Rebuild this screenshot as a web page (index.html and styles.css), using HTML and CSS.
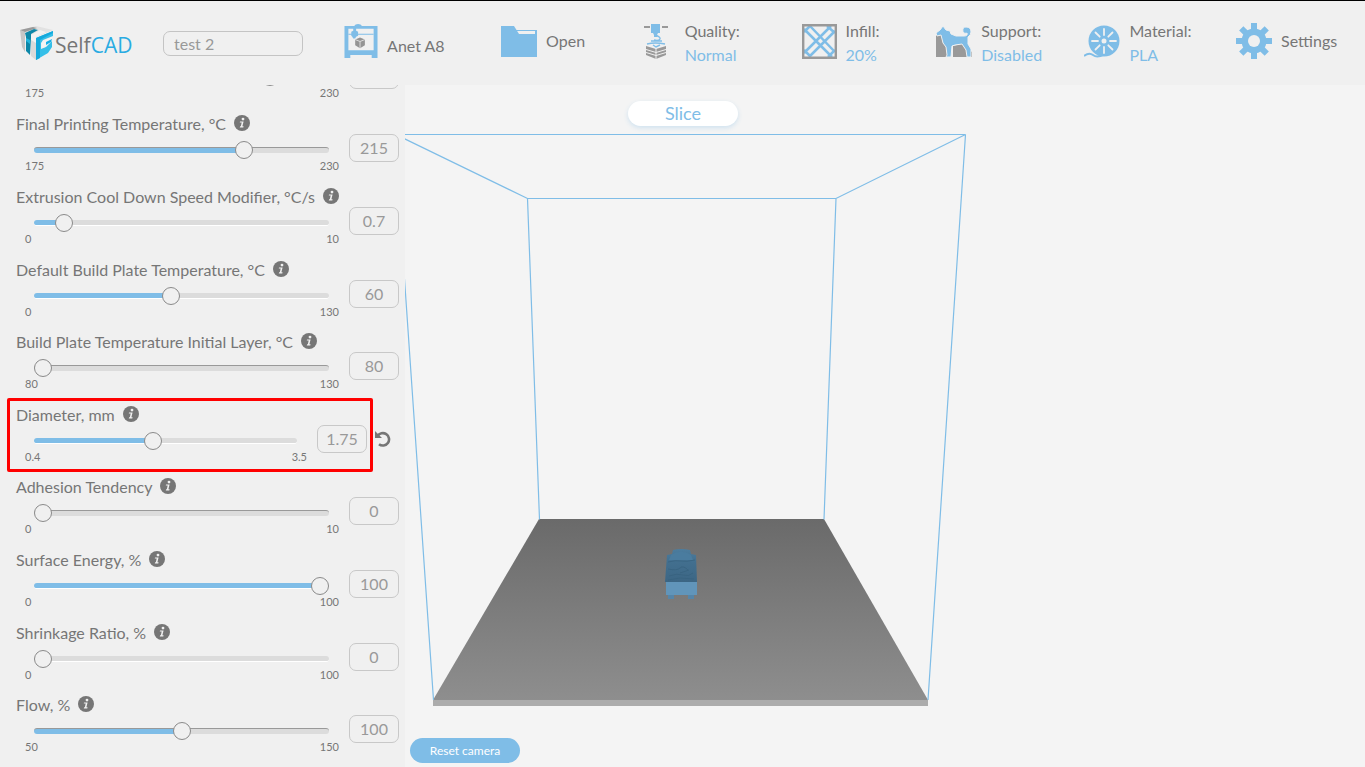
FILE: index.html
```html
<!DOCTYPE html>
<html lang="en">
<head>
<meta charset="utf-8">
<title>SelfCAD slicer</title>
<link rel="stylesheet" href="styles.css">
</head>
<body>
<svg class="defs" aria-hidden="true">
  <symbol id="info" viewBox="0 0 16 16">
    <circle cx="8" cy="8" r="8" fill="#767676"/>
    <circle cx="9" cy="4.1" r="1.4" fill="#f0f0f0"/>
    <path d="M6 6.4h3.6L8.4 11.2h1.2l-.3 1.2H5.8l.3-1.1h.7l.9-3.8H5.8z" fill="#f0f0f0"/>
  </symbol>
</svg>
<header class="topbar">
  <div class="brand">
    <a class="logo" href="#">
      <svg class="logo-mark" width="33" height="34" viewBox="0 0 33 34" aria-hidden="true">
        <path d="M0 4L16 0l17 4-17 7z" fill="#e2e2e2"/>
        <path d="M0 4l5 2v20l-3-5z" fill="#c6c6c6"/>
        <path d="M0 4L13 1l4 1L5 6z" fill="#9a9a9a"/>
        <path d="M5 7l9-4 4 1-7 4v4l-1 17-4-4V11z" fill="#0d87a8"/>
        <path d="M6 12l4 2v4l-4-3z" fill="#23b5dd"/>
        <path d="M11 9l9-5 6 2-10 5v22l-5-3z" fill="#f2f2f2"/>
        <path d="M11 14l5 3v17l-5-4z" fill="#dadada"/>
        <path d="M16 12L33 5v5l-10 4-2 3v6l5-2 6-6v6l-4 6-12 7z" fill="#35bfe8"/>
        <path d="M16 12L33 5v2l-13 7v18l-4 2z" fill="#15a9dc"/>
        <path d="M24 15l8-4-1 4-6 6-3 1v-5z" fill="#f4f4f4"/>
        <path d="M26 16l6-3-1 3-5 3z" fill="#18b0e8"/>
      </svg>
      <span class="logo-text">Self</span><span class="logo-text logo-accent">CAD</span>
    </a>
    <input class="project-name" type="text" value="test 2" aria-label="Project name">
  </div>
  <nav class="tools">
    <button class="tool" type="button">
      <svg width="34" height="34" viewBox="0 0 34 35" aria-hidden="true">
        <path fill="#7fbde7" fill-rule="evenodd" d="M0 2h10q1-2 4-2 3 0 4 2h16v33h-6v-3H6v3H0zM4 5v22h26V5z"/>
        <path fill="#7fbde7" d="M4 10h26v1H4zM9 4h3v3l2 1v4l-2 1-1 2H9l-1-2-1-1V8l2-1z"/>
        <path fill="#949494" d="M16 14l5 2v6l-5 3-5-3v-6z"/>
        <path fill="none" stroke="#ededed" stroke-width=".8" d="M11 16l5 2 5-2M16 18v7"/>
      </svg>
      <span class="tool-label low">Anet A8</span>
    </button>
    <button class="tool" type="button">
      <svg width="36" height="31" viewBox="0 0 36 31" aria-hidden="true">
        <path fill="#7fbde7" d="M0 0h13l5 8h16V5H16l-1-1h21v27H0z"/>
      </svg>
      <span class="tool-label">Open</span>
    </button>
    <button class="tool wide" type="button">
      <svg width="25" height="35" viewBox="0 0 25 35" aria-hidden="true">
        <path fill="#999" d="M0 2h6v2H0zM18 2h6v2h-6zM2 22l10 3 10-3v3l-10 3-10-3zM2 26l10 3 10-3v2l-10 3-10-3zM2 29l10 3 10-3v2l-10 4-10-4z"/>
        <path fill="#7fbde7" d="M7 0h9v9h-2l-1 2v2h-3v-2L9 9H7z"/>
        <path fill="none" stroke="#7fbde7" stroke-width="1.400" d="M11 11q6 2 5 4t-6 1M7 17h11M3 20q8-2 18 0M9 21l3 2 4-2"/>
        <path fill="none" stroke="#f0f0f0" d="M12 24v11"/>
      </svg>
      <span class="tool-label stacked">Quality:<span class="tool-value">Normal</span></span>
    </button>
    <button class="tool" type="button">
      <svg width="35" height="35" viewBox="0 0 35 35" aria-hidden="true">
        <path fill="none" stroke="#7fbde7" stroke-width="2.500" d="M2 8L8 2M2 29L29 2M7 33L33 7M26 33l7-7M2 26l7 7M2 5l28 28M8 2l25 26M25 2l8 7"/>
        <path fill="none" stroke="#999" stroke-width="2.400" d="M1.200 1.200h32.600v32.600H1.200z"/>
      </svg>
      <span class="tool-label stacked">Infill:<span class="tool-value">20%</span></span>
    </button>
    <button class="tool" type="button">
      <svg width="36" height="31" viewBox="0 0 36 31" aria-hidden="true">
        <path fill="#999" d="M0 9h7l4 6 2 16H0zM17 20l8-2h6l2 6 3 2v5H17z"/>
        <path stroke="#f0f0f0" stroke-width="1" fill="#7fbde7" d="M7 0l3 4 4 1 1 3 5 2h8q4 0 3-3-1 1-2 0-1 1-2-1-1-5 3-5 5 0 5 5 0 3-3 5v7l3 5v8h-4l-1-7-4-6-7 1-3 1-1 11h-5l1-2-1-8-3-4-2-8-4 1-1-3 4-3z"/>
      </svg>
      <span class="tool-label stacked">Support:<span class="tool-value">Disabled</span></span>
    </button>
    <button class="tool" type="button">
      <svg width="36" height="33" viewBox="0 0 36 33" aria-hidden="true">
        <circle cx="20" cy="16" r="15.500" fill="#7fbde7"/>
        <path d="M0 31q5-4 9-1t11-.5" fill="none" stroke="#7fbde7" stroke-width="2"/>
        <path stroke="#f0f0f0" stroke-width="1.800" stroke-linecap="round" d="M20 4v6M20 22v6M8 16h6M26 16h6M11.500 7.500l4.200 4.200M24.300 20.300l4.200 4.200M28.500 7.500l-4.200 4.200M15.700 20.300l-4.200 4.200"/>
        <circle cx="20" cy="16" r="2.500" fill="#f0f0f0"/>
      </svg>
      <span class="tool-label stacked">Material:<span class="tool-value">PLA</span></span>
    </button>
    <button class="tool" type="button">
      <svg width="36" height="36" viewBox="-18 -18 36 36" aria-hidden="true">
        <g fill="#7fbde7">
          <path d="M-3-18h6v36h-6z"/>
          <path d="M-3-18h6v36h-6z" transform="rotate(45)"/>
          <path d="M-3-18h6v36h-6z" transform="rotate(90)"/>
          <path d="M-3-18h6v36h-6z" transform="rotate(135)"/>
          <circle r="12.500"/>
        </g>
        <circle r="6" fill="#f0f0f0"/>
      </svg>
      <span class="tool-label">Settings</span>
    </button>
  </nav>
</header>
<main class="workspace">
  <form class="panel">
    <div class="param">
      <div class="param-main">
        <label class="param-name" for="r0">Printing Temperature, °C <svg class="info"><use href="#info"/></svg></label>
        <input class="slider" id="r0" type="range" min="175" max="230" value="220" style="--fill:82%">
        <div class="scale"><span>175</span><span>230</span></div>
      </div>
      <input class="value" type="text" value="220" aria-label="Printing Temperature value">
    </div>
    <div class="param">
      <div class="param-main">
        <label class="param-name" for="r1">Final Printing Temperature, °C <svg class="info"><use href="#info"/></svg></label>
        <input class="slider edged" id="r1" type="range" min="175" max="230" value="215" style="--fill:72%">
        <div class="scale"><span>175</span><span>230</span></div>
      </div>
      <input class="value" type="text" value="215" aria-label="Final Printing Temperature value">
    </div>
    <div class="param">
      <div class="param-main">
        <label class="param-name" for="r2">Extrusion Cool Down Speed Modifier, °C/s <svg class="info"><use href="#info"/></svg></label>
        <input class="slider" id="r2" type="range" min="0" max="10" step="0.05" value="0.75" style="--fill:8%">
        <div class="scale"><span>0</span><span>10</span></div>
      </div>
      <input class="value" type="text" value="0.7" aria-label="Extrusion Cool Down Speed Modifier value">
    </div>
    <div class="param">
      <div class="param-main">
        <label class="param-name" for="r3">Default Build Plate Temperature, °C <svg class="info"><use href="#info"/></svg></label>
        <input class="slider" id="r3" type="range" min="0" max="130" value="60" style="--fill:46%">
        <div class="scale"><span>0</span><span>130</span></div>
      </div>
      <input class="value" type="text" value="60" aria-label="Default Build Plate Temperature value">
    </div>
    <div class="param">
      <div class="param-main">
        <label class="param-name" for="r4">Build Plate Temperature Initial Layer, °C <svg class="info"><use href="#info"/></svg></label>
        <input class="slider edged" id="r4" type="range" min="80" max="130" value="80" style="--fill:0%">
        <div class="scale"><span>80</span><span>130</span></div>
      </div>
      <input class="value" type="text" value="80" aria-label="Build Plate Temperature Initial Layer value">
    </div>
    <div class="param highlighted">
      <div class="param-main">
        <label class="param-name" for="r5">Diameter, mm <svg class="info"><use href="#info"/></svg></label>
        <input class="slider" id="r5" type="range" min="0.4" max="3.5" step="0.01" value="1.79" style="--fill:45%">
        <div class="scale"><span>0.4</span><span>3.5</span></div>
      </div>
      <input class="value" type="text" value="1.75" aria-label="Diameter value">
      <button class="reset" type="button" aria-label="Reset diameter">
        <svg width="16" height="16" viewBox="0 0 16 16" aria-hidden="true"><path d="M2.500 5.200A6.200 6.200 0 1 1 4 13.200" fill="none" stroke="#767676" stroke-width="2.600"/><path d="M0 0v7h7z" fill="#767676"/></svg>
      </button>
    </div>
    <div class="param">
      <div class="param-main">
        <label class="param-name" for="r6">Adhesion Tendency <svg class="info"><use href="#info"/></svg></label>
        <input class="slider edged" id="r6" type="range" min="0" max="10" value="0" style="--fill:0%">
        <div class="scale"><span>0</span><span>10</span></div>
      </div>
      <input class="value" type="text" value="0" aria-label="Adhesion Tendency value">
    </div>
    <div class="param">
      <div class="param-main">
        <label class="param-name" for="r7">Surface Energy, % <svg class="info"><use href="#info"/></svg></label>
        <input class="slider" id="r7" type="range" min="0" max="100" value="100" style="--fill:98%">
        <div class="scale"><span>0</span><span>100</span></div>
      </div>
      <input class="value" type="text" value="100" aria-label="Surface Energy value">
    </div>
    <div class="param">
      <div class="param-main">
        <label class="param-name" for="r8">Shrinkage Ratio, % <svg class="info"><use href="#info"/></svg></label>
        <input class="slider" id="r8" type="range" min="0" max="100" value="0" style="--fill:0%">
        <div class="scale"><span>0</span><span>100</span></div>
      </div>
      <input class="value" type="text" value="0" aria-label="Shrinkage Ratio value">
    </div>
    <div class="param">
      <div class="param-main">
        <label class="param-name" for="r9">Flow, % <svg class="info"><use href="#info"/></svg></label>
        <input class="slider edged" id="r9" type="range" min="50" max="150" value="100" style="--fill:50%">
        <div class="scale"><span>50</span><span>150</span></div>
      </div>
      <input class="value" type="text" value="100" aria-label="Flow value">
    </div>
  </form>
  <section class="viewport" aria-label="Build volume">
    <svg class="scene" viewBox="405 85 960 682" preserveAspectRatio="xMidYMid slice" aria-hidden="true">
      <defs>
        <linearGradient id="plate" x1="0" y1="0" x2="0" y2="1">
          <stop offset="0" stop-color="#6a6a6a"/><stop offset="1" stop-color="#8e8e8e"/>
        </linearGradient>
        <linearGradient id="quilt" x1="0" y1="0" x2="0" y2="1">
          <stop offset="0" stop-color="#4c7d9f"/><stop offset=".4" stop-color="#426f8f"/><stop offset="1" stop-color="#3c6684"/>
        </linearGradient>
      </defs>
      <path d="M539 519H824L928 700H433z" fill="url(#plate)"/>
      <path d="M433 700h495v6H433z" fill="#acacac"/>
      <g fill="none" stroke="#7fbde7" stroke-width="1.200">
        <path d="M404 134.500H965.500L836 198.500H527.500L404 138.500M527.500 198.500L539.500 519.500M836 198.500L824 519.500M965.500 134.500L928 700M404.500 279L433.500 700"/>
      </g>
      <path d="M668 594h6v5h-6zM688 594h6v5h-6z" fill="#5585a8"/>
      <path d="M667 555l5-1 1-4q8-2 17 0l1 4 5 1 1 27h-32z" fill="url(#quilt)"/>
      <path d="M671 555q10-7 20 0l2 5h-24z" fill="#4a7c9f"/>
      <path d="M668 562q8-2 13-1t14-1M668 569q9 2 12-1t8 2M680 573l9-3M669 576q8-3 14-1t10-2M668 580l12-2 14 1" fill="none" stroke="#37627f" stroke-width=".8"/>
      <path d="M666 582h31v13h-31z" fill="#6195ba"/>
    </svg>
    <button class="slice" type="button">Slice</button>
    <button class="reset-camera" type="button">Reset camera</button>
  </section>
</main>
</body>
</html>
```
FILE: styles.css
```css
*,
*::after {
  box-sizing: border-box;
}

body {
  margin: 0;
  height: 100vh;
  display: flex;
  flex-direction: column;
  overflow: hidden;
  background: #f4f4f4;
  color: #767676;
  font: 16px/24px Lato, "Liberation Sans", sans-serif;
}

button,
input {
  font: inherit;
  color: inherit;
}

button {
  padding: 0;
  border: 0;
  background: none;
  cursor: pointer;
}

.defs {
  position: absolute;
  width: 0;
  height: 0;
}

/* Top bar */
.topbar {
  display: flex;
  flex: none;
  height: 85px;
  border-top: 1px solid #000;
  background: #f0f0f0;
}

.brand {
  display: flex;
  align-items: center;
  justify-content: space-between;
  flex: none;
  width: 320px;
  padding: 0 17px 0 20px;
}

.logo {
  display: flex;
  align-items: center;
  color: #767676;
  text-decoration: none;
}

.logo-mark {
  margin-right: 2px;
}

.logo-text {
  padding-top: 4px;
  font: 21px/30px "Open Sans", sans-serif;
}

.logo-accent {
  color: #29abe2;
}

.project-name {
  width: 140px;
  height: 25px;
  padding: 0 10px;
  border: 1px solid #c4c4c4;
  border-radius: 7px;
  background: transparent;
  color: #999;
}

.tools {
  display: grid;
  flex: 1;
  grid-template-columns: repeat(7, 1fr);
  margin-right: 4px;
}

.tool {
  display: flex;
  align-items: center;
  justify-content: center;
  gap: 9px;
  padding-bottom: 4px;
  text-align: left;
}

.tool.wide {
  gap: 16px;
}

.tool-label.low {
  padding-top: 10px;
}

.tool-label.stacked {
  padding-top: 4px;
}

.tool-value {
  display: block;
  color: #7fbde7;
}

/* Parameter panel */
.workspace {
  display: flex;
  flex: 1;
  min-height: 0;
}

.panel {
  display: flex;
  flex: none;
  flex-direction: column;
  justify-content: flex-end;
  width: 405px;
  padding-bottom: 1px;
  overflow: hidden;
  background: #f0f0f0;
}

.param {
  position: relative;
  display: flex;
  flex: none;
  gap: 10px;
  height: 73px;
  padding-right: 6px;
}

.param:nth-child(5n + 4),
.param.highlighted {
  height: 72px;
}

.param-main {
  display: flex;
  flex: 1;
  flex-direction: column;
}

.param-name {
  display: flex;
  align-items: center;
  gap: 8px;
  height: 24px;
  padding-left: 16px;
  white-space: nowrap;
}

.info {
  width: 16px;
  height: 16px;
  margin-bottom: 2px;
}

.slider {
  flex: none;
  height: 22px;
  margin: 3px 10px 0 34px;
  appearance: none;
  background: transparent;
}

.slider::-webkit-slider-runnable-track {
  height: 6px;
  border-bottom: 1px solid #fff;
  border-radius: 3px;
  background: linear-gradient(to right, #7fbde7 var(--fill), #dcdcdc var(--fill));
}

.slider.edged::-webkit-slider-runnable-track {
  border-top: 1px solid #999;
  border-bottom: 0;
}

.slider::-webkit-slider-thumb {
  width: 18px;
  height: 18px;
  margin-top: -6px;
  appearance: none;
  border: 1px solid #8a8a8a;
  border-radius: 50%;
  background: #f0f0f0;
}

.slider.edged::-webkit-slider-thumb {
  margin-top: -7px;
}

.scale {
  display: flex;
  justify-content: space-between;
  padding-left: 25px;
  font-size: 11px;
  line-height: 10px;
}

.value {
  width: 50px;
  height: 28px;
  margin-top: 22px;
  padding: 0 0 2px;
  border: 1px solid #c8c8c8;
  border-radius: 7px;
  background: transparent;
  color: #999;
  text-align: center;
}

.reset {
  width: 16px;
  height: 16px;
  margin: 28px 8px 0 -2px;
  line-height: 0;
}

.highlighted::after {
  content: "";
  position: absolute;
  top: -5px;
  left: 7px;
  right: 32px;
  height: 74px;
  border: 3px solid #f00;
  border-radius: 2px;
  pointer-events: none;
}

/* 3D viewport */
.viewport {
  position: relative;
  flex: 1;
  overflow: hidden;
}

.scene {
  display: block;
  width: 100%;
  height: 100%;
}

.slice {
  position: absolute;
  top: 16px;
  left: 223px;
  width: 110px;
  height: 25px;
  padding-bottom: 2px;
  border-radius: 13px;
  background: #fff;
  box-shadow: 0 2px 5px #cfe2f0;
  color: #7fbde7;
  font-size: 18px;
}

.reset-camera {
  position: absolute;
  bottom: 4px;
  left: 5px;
  width: 110px;
  height: 25px;
  border-radius: 13px;
  background: #7fbde7;
  color: #fff;
  font-size: 12px;
}
```
